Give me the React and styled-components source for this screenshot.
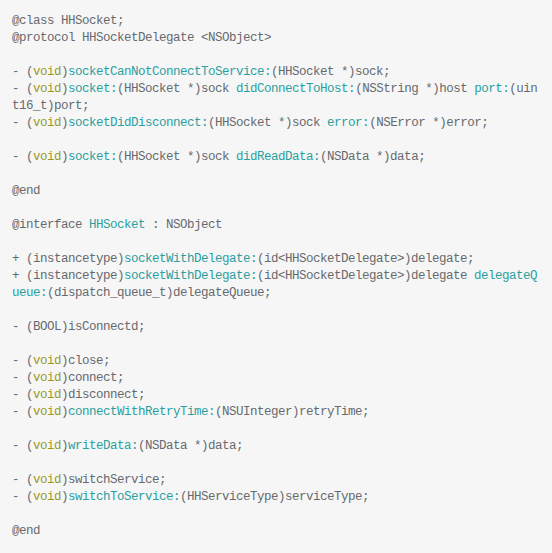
import styled, { createGlobalStyle } from "styled-components";

const Global = createGlobalStyle`
  html, body { margin: 0; padding: 0; background: #f6f6f6; }
`;

const V = "void";
const lines = [
  [["p", "@class HHSocket;"]],
  [["p", "@protocol HHSocketDelegate <NSObject>"]],
  [],
  [["p", "- ("], ["k", V], ["p", ")"], ["f", "socketCanNotConnectToService:"], ["p", "(HHSocket *)sock;"]],
  [["p", "- ("], ["k", V], ["p", ")"], ["f", "socket:"], ["p", "(HHSocket *)sock "], ["f", "didConnectToHost:"], ["p", "(NSString *)host "], ["f", "port:"], ["p", "(uin"]],
  [["p", "t16_t)port;"]],
  [["p", "- ("], ["k", V], ["p", ")"], ["f", "socketDidDisconnect:"], ["p", "(HHSocket *)sock "], ["f", "error:"], ["p", "(NSError *)error;"]],
  [],
  [["p", "- ("], ["k", V], ["p", ")"], ["f", "socket:"], ["p", "(HHSocket *)sock "], ["f", "didReadData:"], ["p", "(NSData *)data;"]],
  [],
  [["p", "@end"]],
  [],
  [["p", "@interface "], ["f", "HHSocket"], ["p", " : NSObject"]],
  [],
  [["p", "+ (instancetype)"], ["f", "socketWithDelegate:"], ["p", "(id<HHSocketDelegate>)delegate;"]],
  [["p", "+ (instancetype)"], ["f", "socketWithDelegate:"], ["p", "(id<HHSocketDelegate>)delegate "], ["f", "delegateQ"]],
  [["f", "ueue:"], ["p", "(dispatch_queue_t)delegateQueue;"]],
  [],
  [["p", "- (BOOL)isConnectd;"]],
  [],
  [["p", "- ("], ["k", V], ["p", ")close;"]],
  [["p", "- ("], ["k", V], ["p", ")connect;"]],
  [["p", "- ("], ["k", V], ["p", ")disconnect;"]],
  [["p", "- ("], ["k", V], ["p", ")"], ["f", "connectWithRetryTime:"], ["p", "(NSUInteger)retryTime;"]],
  [],
  [["p", "- ("], ["k", V], ["p", ")"], ["f", "writeData:"], ["p", "(NSData *)data;"]],
  [],
  [["p", "- ("], ["k", V], ["p", ")switchService;"]],
  [["p", "- ("], ["k", V], ["p", ")"], ["f", "switchToService:"], ["p", "(HHServiceType)serviceType;"]],
  [],
  [["p", "@end"]],
];

const colors = { p: "#666a6e", k: "#999a1f", f: "#2b9f9f" };

const CodeBlock = styled.pre`
  margin: 0;
  box-sizing: border-box;
  width: 552px;
  min-height: 553px;
  padding: 13px 12px 16px 12px;
  background: #f6f6f6;
  font-family: "Liberation Mono", "DejaVu Sans Mono", monospace;
  font-size: 12.5px;
  letter-spacing: -0.5px;
  line-height: 17px;
  color: #666a6e;
`;

const Line = styled.div`
  height: 17px;
  white-space: pre;
`;

const Token = styled.span`
  color: ${(p) => colors[p.$kind]};
`;

const App = () => (
  <>
    <Global />
    <CodeBlock>
      {lines.map((line, i) => (
        <Line key={i}>
          {line.map(([kind, text], j) => (
            <Token key={j} $kind={kind}>
              {text}
            </Token>
          ))}
        </Line>
      ))}
    </CodeBlock>
  </>
);

export default App;
